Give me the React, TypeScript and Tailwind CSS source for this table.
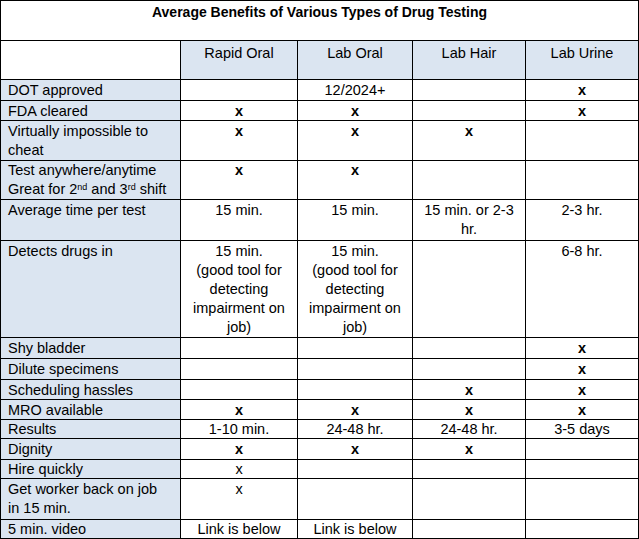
import React from 'react';

type Row = { label: React.ReactNode; h: number; cells: React.ReactNode[]; multi?: boolean };

const X = <span className="font-bold">x</span>;

const rows: Row[] = [
  { label: 'DOT approved', h: 21, cells: ['', '12/2024+', '', X] },
  { label: 'FDA cleared', h: 20, cells: [X, X, '', X] },
  { label: 'Virtually impossible to cheat', h: 40, cells: [X, X, X, ''], multi: true },
  {
    label: (
      <>
        Test anywhere/anytime
        <br />
        Great for 2<sup className="text-[9px] leading-none">nd</sup> and 3<sup className="text-[9px] leading-none">rd</sup> shift
      </>
    ),
    h: 39,
    cells: [X, X, '', ''],
    multi: true,
  },
  { label: 'Average time per test', h: 41, cells: ['15 min.', '15 min.', '15 min. or 2-3 hr.', '2-3 hr.'], multi: true },
  {
    label: 'Detects drugs in',
    h: 97,
    cells: [
      <>15 min.<br />(good tool for detecting impairment on job)</>,
      <>15 min.<br />(good tool for detecting impairment on job)</>,
      '',
      '6-8 hr.',
    ],
    multi: true,
  },
  { label: 'Shy bladder', h: 21, cells: ['', '', '', X] },
  { label: 'Dilute specimens', h: 21, cells: ['', '', '', X] },
  { label: 'Scheduling hassles', h: 20, cells: ['', '', X, X] },
  { label: 'MRO available', h: 20, cells: [X, X, X, X] },
  { label: 'Results', h: 19, cells: ['1-10 min.', '24-48 hr.', '24-48 hr.', '3-5 days'] },
  { label: 'Dignity', h: 21, cells: [X, X, X, ''] },
  { label: 'Hire quickly', h: 19, cells: ['x', '', '', ''] },
  { label: <>Get worker back on job<br />in 15 min.</>, h: 41, cells: ['x', '', '', ''], multi: true },
  { label: '5 min. video', h: 19, cells: ['Link is below', 'Link is below', '', ''] },
];

const cell = 'border border-black align-top';

const App = () => {
  return (
    <div className="w-[639px] h-[539px] bg-white text-black text-[14.5px] font-['Liberation_Sans',Arial,sans-serif]">
      <table className="table-fixed border-collapse w-[638px]">
        <colgroup>
          <col className="w-[180px]" />
          <col className="w-[117px]" />
          <col className="w-[115px]" />
          <col className="w-[113px]" />
          <col className="w-[113px]" />
        </colgroup>
        <tbody>
          <tr className="h-[40px]">
            <td colSpan={5} className={`${cell} text-center font-bold text-[14px] leading-[19px] pt-[2px]`}>
              Average Benefits of Various Types of Drug Testing
            </td>
          </tr>
          <tr className="h-[39px]">
            <td className={cell}></td>
            {['Rapid Oral', 'Lab Oral', 'Lab Hair', 'Lab Urine'].map((t) => (
              <td key={t} className={`${cell} bg-[#dbe5f1] text-center leading-[19px] pt-[3px]`}>
                {t}
              </td>
            ))}
          </tr>
          {rows.map((r, i) => {
            const lead = r.multi ? 'leading-[19px]' : 'leading-[18px]';
            const pad = r.h === 39 || r.h === 19 ? 'pt-0' : 'pt-px';
            return (
              <tr key={i} style={{ height: r.h }}>
                <td className={`${cell} ${lead} ${pad} bg-[#dbe5f1] pl-[7px] pr-1`}>{r.label}</td>
                {r.cells.map((c, j) => (
                  <td key={j} className={`${cell} ${lead} ${pad} text-center px-[6px]`}>
                    {c}
                  </td>
                ))}
              </tr>
            );
          })}
        </tbody>
      </table>
    </div>
  );
};

export default App;
